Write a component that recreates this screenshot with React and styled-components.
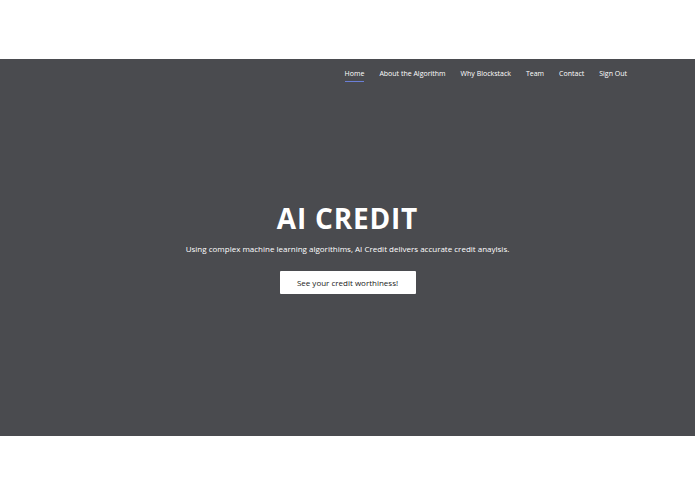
import styled, { createGlobalStyle } from "styled-components";

const GlobalStyle = createGlobalStyle`
  html, body {
    margin: 0;
    padding: 0;
    background: #ffffff;
  }
  body {
    font-family: "Open Sans", "Liberation Sans", sans-serif;
  }
`;

const Page = styled.div`
  padding: 59px 0 58px;
`;

const Hero = styled.section`
  background: #4a4b4f;
  height: 377px;
  display: flex;
  flex-direction: column;
`;

const Nav = styled.nav`
  display: flex;
  justify-content: flex-end;
  gap: 15px;
  padding: 9px 68px 0 0;
`;

const NavLink = styled.a`
  color: #ffffff;
  font-size: 7px;
  line-height: 12px;
  padding-bottom: 1px;
  text-decoration: none;
  border-bottom: 1px solid ${(p) => (p.$active ? "#6b7fd7" : "transparent")};
`;

const Content = styled.div`
  flex: 1;
  display: flex;
  flex-direction: column;
  align-items: center;
  padding-top: 118px;
`;

const Title = styled.h1`
  margin: 0;
  color: #ffffff;
  font-family: "Open Sans", "Liberation Sans", sans-serif;
  font-weight: 700;
  font-size: 28px;
  line-height: 36px;
  letter-spacing: 0.8px;
`;

const Subtitle = styled.p`
  margin: 7px 0 0;
  color: #ffffff;
  font-size: 8px;
  line-height: 12px;
`;

const Button = styled.button`
  margin-top: 16px;
  width: 136px;
  height: 23px;
  background: #ffffff;
  border: none;
  border-radius: 1px;
  color: #222222;
  font-family: "Open Sans", "Liberation Sans", sans-serif;
  font-size: 8px;
  cursor: pointer;
`;

const links = [
  "Home",
  "About the Algorithm",
  "Why Blockstack",
  "Team",
  "Contact",
  "Sign Out",
];

export default function App() {
  return (
    <Page>
      <GlobalStyle />
      <Hero>
        <Nav>
          {links.map((l, i) => (
            <NavLink key={l} href="#" $active={i === 0}>
              {l}
            </NavLink>
          ))}
        </Nav>
        <Content>
          <Title>AI CREDIT</Title>
          <Subtitle>
            Using complex machine learning algorithims, AI Credit delivers
            accurate credit anaylsis.
          </Subtitle>
          <Button>See your credit worthiness!</Button>
        </Content>
      </Hero>
    </Page>
  );
}
